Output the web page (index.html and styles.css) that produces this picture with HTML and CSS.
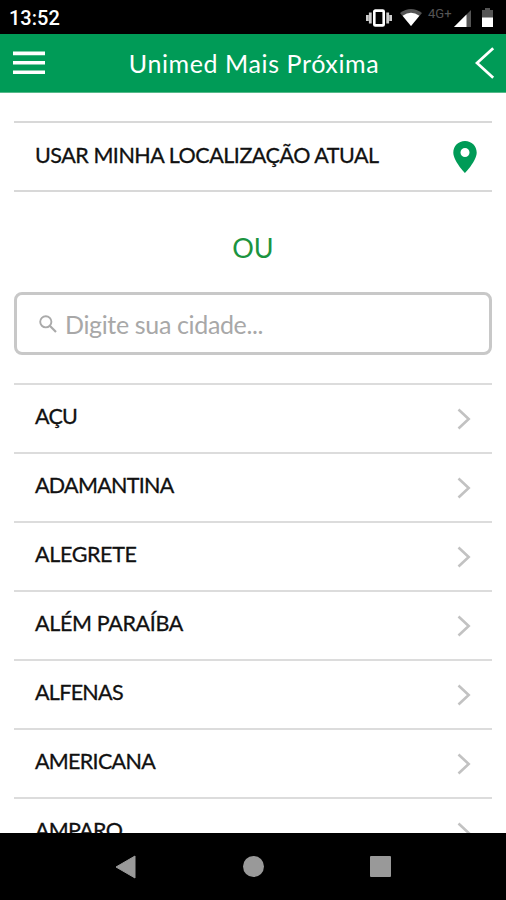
FILE: index.html
```html
<!DOCTYPE html>
<html lang="pt-BR">
<head>
    <meta charset="UTF-8">
    <meta name="viewport" content="width=device-width, initial-scale=1.0">
    <title>Unimed Mais Próxima</title>
    <link rel="stylesheet" href="styles.css">
</head>
<body>
    <svg class="symbols" width="0" height="0">
        <symbol id="chevron" viewBox="0 0 14 22">
            <path d="M1.5 1.5 11.7 11 1.5 20.5" fill="none" stroke="#c2c2c2" stroke-width="2.6"/>
        </symbol>
    </svg>

    <div class="status-bar">
        <span class="clock">13:52</span>
        <svg class="vibrate" width="26" height="18" viewBox="0 0 26 18">
            <path d="M1.3 6v6M4.3 3.5v11M21.7 3.5v11M24.7 6v6" stroke="#ccc" stroke-width="2.8"/>
            <rect x="8.3" y="1.6" width="9.4" height="14.8" rx="1" fill="none" stroke="#fff" stroke-width="2.6"/>
        </svg>
        <svg class="wifi" width="22" height="17" viewBox="0 0 22 17">
            <path d="M0 4Q11-4 22 4L11 17z" fill="#555"/>
            <path d="M2.6 6.7Q11 .8 19.4 6.7L11 17z" fill="#fff"/>
        </svg>
        <span class="network">4G+</span>
        <svg class="signal" width="17" height="17" viewBox="0 0 17 17">
            <path d="M17 0v17H0z" fill="#555"/>
            <path d="M12.5 4.5V17H0z" fill="#fff"/>
        </svg>
        <svg class="battery" width="11" height="19" viewBox="0 0 11 19">
            <path d="M3 0h5v2h3v8H0V2h3z" fill="#555"/>
            <path d="M0 9.5h11V19H0z" fill="#fff"/>
        </svg>
    </div>

    <header>
        <svg width="32" height="24" viewBox="0 0 32 24">
            <path d="M0 2.4h32M0 11.8h32M0 21.2h32" stroke="#fff" stroke-width="3.6"/>
        </svg>
        <h1>Unimed Mais Próxima</h1>
        <svg width="20" height="32" viewBox="0 0 20 32">
            <path d="M18.2 1.3 2 16l16.2 14.7" fill="none" stroke="#fff" stroke-width="2.8"/>
        </svg>
    </header>

    <main>
        <div class="location">
            <span class="location-text">USAR MINHA LOCALIZAÇÃO ATUAL</span>
            <svg width="24" height="32" viewBox="0 0 24 32">
                <path d="M12 0C5.4 0 .3 5.1.3 11.5.3 20 12 32 12 32s11.7-12 11.7-20.5C23.7 5.1 18.6 0 12 0zm0 7a4.5 4.5 0 1 1 0 9 4.500 4.500 0 0 1 0-9z" fill="#009b57"/>
            </svg>
        </div>

        <p class="or">OU</p>

        <div class="search">
            <svg width="18" height="18" viewBox="0 0 18 18">
                <circle cx="6.8" cy="6.8" r="5.6" fill="none" stroke="#aaa" stroke-width="1.9"/>
                <path d="M10.8 10.8 17 17" stroke="#aaa" stroke-width="2.2"/>
            </svg>
            <span>Digite sua cidade...</span>
        </div>

        <ul class="cities">
            <li><span>AÇU</span><svg width="14" height="22"><use href="#chevron"/></svg></li>
            <li><span>ADAMANTINA</span><svg width="14" height="22"><use href="#chevron"/></svg></li>
            <li><span class="wide">ALEGRETE</span><svg width="14" height="22"><use href="#chevron"/></svg></li>
            <li><span class="wide">ALÉM PARAÍBA</span><svg width="14" height="22"><use href="#chevron"/></svg></li>
            <li><span>ALFENAS</span><svg width="14" height="22"><use href="#chevron"/></svg></li>
            <li><span>AMERICANA</span><svg width="14" height="22"><use href="#chevron"/></svg></li>
            <li><span>AMPARO</span><svg width="14" height="22"><use href="#chevron"/></svg></li>
        </ul>
    </main>

    <nav>
        <svg width="21" height="24" viewBox="0 0 21 24">
            <path d="M20 1v22L1 12z" fill="#999" stroke="#999" stroke-linejoin="round"/>
        </svg>
        <span class="home"></span>
        <span class="recent"></span>
    </nav>
</body>
</html>
```

FILE: styles.css
```css
* {
    box-sizing: border-box;
}
body {
    display: flex;
    flex-direction: column;
    height: 900px;
    margin: 0;
    overflow: hidden;
    background: #fff;
    color: #111;
    font-family: Lato, "Noto Sans", sans-serif;
}
svg {
    display: block;
    flex: none;
}
.symbols {
    position: absolute;
}
.status-bar {
    display: flex;
    flex: none;
    align-items: flex-start;
    height: 34px;
    padding: 8px 13px 0 9px;
    background: #000;
    color: #fff;
    font-family: Roboto, sans-serif;
}
.clock {
    margin-right: auto;
    font-size: 20px;
    font-weight: 500;
    line-height: 21px;
}
.vibrate {
    margin: 1px 8px 0 0;
}
.wifi {
    margin: 1px 6px 0 0;
}
.network {
    width: 26px;
    color: #555;
    font-size: 13px;
    line-height: 12px;
}
.signal {
    margin: 2px 11px 0 0;
}
header {
    display: flex;
    flex: none;
    align-items: center;
    justify-content: space-between;
    height: 59px;
    padding: 0 11px 0 13px;
    background: #009b57;
    border-bottom: 1px solid #55b98a;
    color: #fff;
}
h1 {
    margin: 0;
    padding-right: 12px;
    font-size: 25px;
    font-weight: 400;
    line-height: 30px;
    letter-spacing: 0.6px;
}
main {
    flex: 1;
    min-height: 0;
    overflow: hidden;
    padding: 28px 14px 0;
}
.location {
    display: flex;
    align-items: center;
    justify-content: space-between;
    height: 71px;
    padding: 0 15px 0 21px;
    border-top: 2px solid #d8d8d8;
    border-bottom: 2px solid #d8d8d8;
}
.location-text,
.cities span {
    padding-bottom: 6px;
    font-size: 21.5px;
    line-height: 26px;
    letter-spacing: -0.7px;
    white-space: nowrap;
    -webkit-text-stroke: 0.3px #111;
}
.location-text {
    padding-bottom: 4px;
    letter-spacing: -0.47px;
}
.cities .wide {
    letter-spacing: -0.35px;
}
.or {
    margin: 39px 0 28px;
    color: #1b9440;
    font-size: 27px;
    line-height: 33px;
    text-align: center;
}
.search {
    display: flex;
    align-items: center;
    gap: 8px;
    height: 63px;
    padding: 0 22px;
    border: 3px solid #c8c8c8;
    border-radius: 8px;
    color: #a8a8a8;
    font-size: 25px;
    letter-spacing: -0.35px;
}
.cities {
    margin: 28px 0 0;
    padding: 0;
    list-style: none;
}
.cities li {
    display: flex;
    align-items: center;
    justify-content: space-between;
    height: 69px;
    padding: 1px 21px 0;
    border-top: 2px solid #dcdcdc;
}
nav {
    display: flex;
    flex: none;
    align-items: center;
    justify-content: space-between;
    height: 67px;
    padding: 0 115px;
    background: #000;
}
.home {
    width: 21px;
    height: 21px;
    border-radius: 50%;
    background: #999;
}
.recent {
    width: 21px;
    height: 21px;
    border-radius: 1px;
    background: #999;
}
```
